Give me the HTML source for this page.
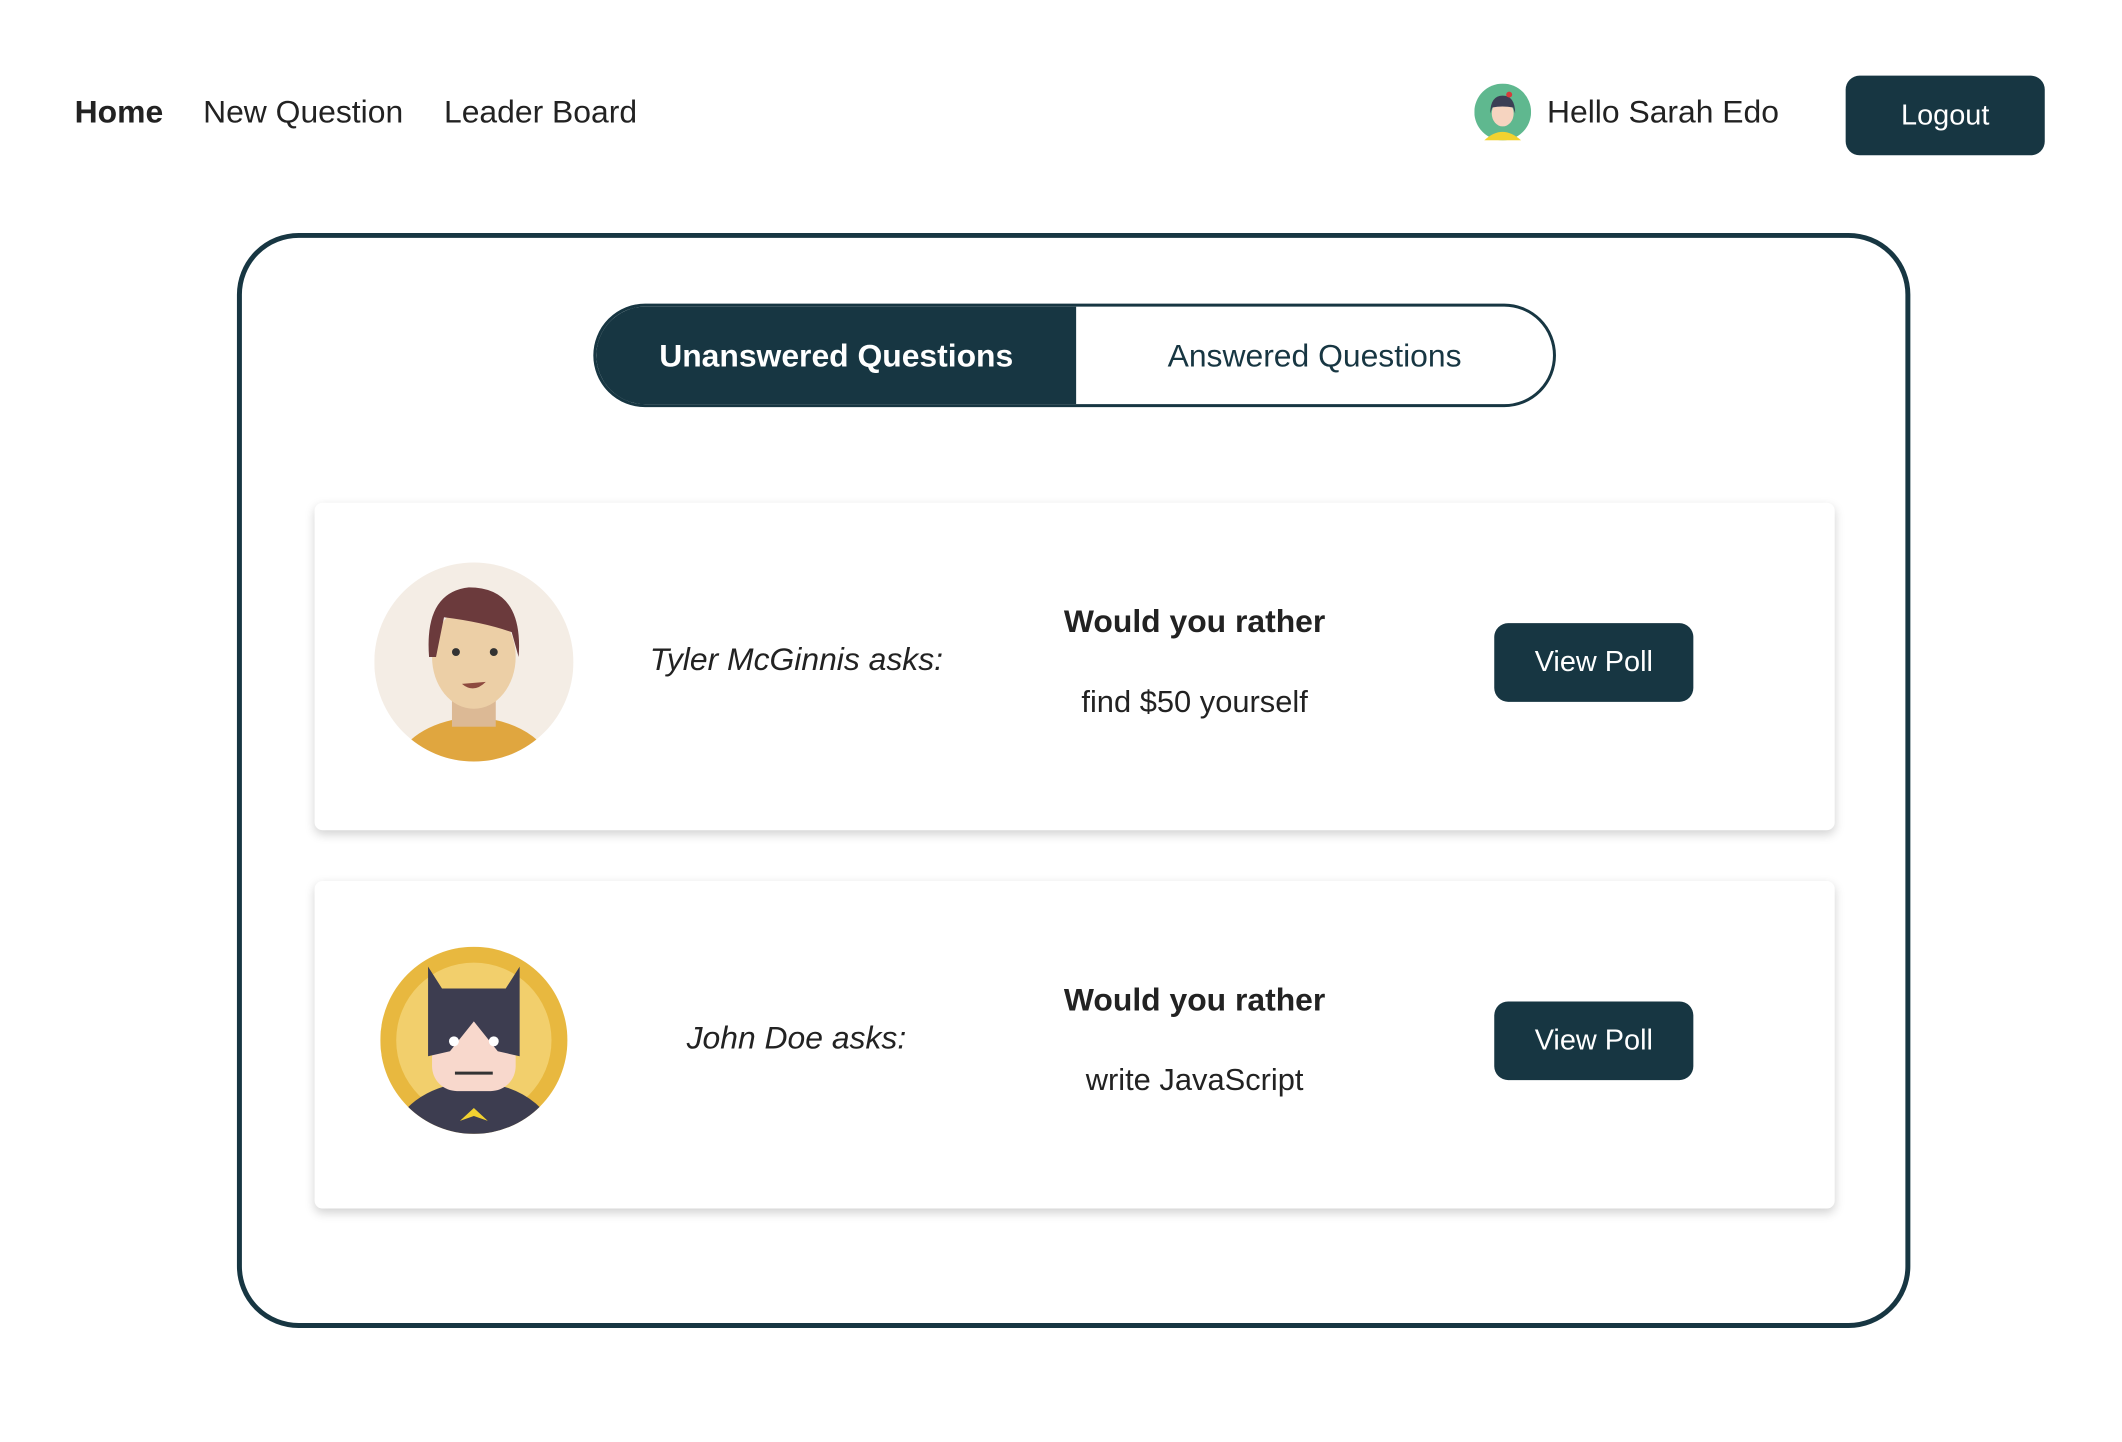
<!DOCTYPE html>
<html><head><meta charset="utf-8"><style>
*{margin:0;padding:0;box-sizing:border-box}
body{width:2122px;height:1442px;background:#fff;font-family:"Liberation Sans",sans-serif;color:#222;position:relative;overflow:hidden}
#w{position:absolute;left:0;top:0;width:2122px;height:1442px;transform:scale(0.9955);transform-origin:0 0}
.a{position:absolute;white-space:nowrap}
.nav{font-size:32px;top:94px}
.btn{position:absolute;background:#173642;color:#fff;border-radius:14px;display:flex;align-items:center;justify-content:center;font-size:29px}
.box{position:absolute;left:238px;top:234px;width:1681px;height:1100px;border:5px solid #173642;border-radius:62px}
.tog{position:absolute;left:596px;top:305px;width:967px;height:104px;border:3px solid #173642;border-radius:52px;overflow:hidden;display:flex}
.tog div{flex:1;display:flex;align-items:center;justify-content:center;font-size:32px;color:#173642}
.tog .on{background:#173642;color:#fff;font-weight:bold;flex:0 0 482px}
.card{position:absolute;left:316px;width:1527px;height:329px;background:#fff;border-radius:8px;box-shadow:0 4px 10px rgba(0,0,0,.18)}
.c{position:absolute;transform:translateX(-50%);white-space:nowrap}
</style></head><body><div id="w">
<div class="a nav" style="left:75px;font-weight:bold">Home</div>
<div class="a nav" style="left:204px">New Question</div>
<div class="a nav" style="left:446px">Leader Board</div>
<svg class="a" style="left:1481px;top:84px" width="57" height="57" viewBox="0 0 57 57"><circle cx="28.5" cy="28.5" r="28.5" fill="#5fb88f"/><path d="M10 57 Q28 40 47 57Z" fill="#f2d230"/><ellipse cx="28.5" cy="30" rx="11" ry="13" fill="#f6d4c0"/><path d="M16 30 Q16 12 28.5 12 Q41 12 41 30 L39 24 Q28 22 18 24Z" fill="#3b3f55"/><circle cx="35" cy="11" r="3" fill="#d63b3b"/></svg>
<div class="a nav" style="left:1554px">Hello Sarah Edo</div>
<div class="btn" style="left:1854px;top:76px;width:200px;height:80px">Logout</div>
<div class="box"></div>
<div class="tog"><div class="on">Unanswered Questions</div><div>Answered Questions</div></div>

<div class="card" style="top:505px"></div>
<svg class="a" style="left:376px;top:565px" width="200" height="200" viewBox="0 0 200 200"><defs><clipPath id="k1"><circle cx="100" cy="100" r="100"/></clipPath></defs><g clip-path="url(#k1)"><rect width="200" height="200" fill="#f4ede5"/><path d="M20 200 Q40 160 100 155 Q160 160 180 200Z" fill="#e0a63f"/><rect x="78" y="120" width="44" height="45" fill="#dcb995"/><ellipse cx="100" cy="95" rx="42" ry="52" fill="#eccfa6"/><path d="M55 95 Q50 30 95 25 Q150 25 145 95 L138 70 Q110 60 70 55 L62 95Z" fill="#6b3a3c"/><circle cx="82" cy="90" r="4" fill="#333"/><circle cx="120" cy="90" r="4" fill="#333"/><path d="M88 122 Q100 132 112 120Z" fill="#8d4a3f"/></g></svg>
<div class="c" style="left:800px;top:644px;font-size:32px;font-style:italic">Tyler McGinnis asks:</div>
<div class="c" style="left:1200px;top:606px;font-size:32px;font-weight:bold">Would you rather</div>
<div class="c" style="left:1200px;top:687px;font-size:31px">find $50 yourself</div>
<div class="btn" style="left:1501px;top:626px;width:200px;height:79px">View Poll</div>

<div class="card" style="top:885px"></div>
<svg class="a" style="left:382px;top:951px" width="188" height="188" viewBox="0 0 188 188"><defs><clipPath id="k2"><circle cx="94" cy="94" r="94"/></clipPath></defs><g clip-path="url(#k2)"><rect width="188" height="188" fill="#e8b83f"/><circle cx="94" cy="94" r="78" fill="#f2cf6c"/><path d="M10 188 Q30 140 94 135 Q158 140 178 188Z" fill="#3d3d50"/><path d="M80 175 L94 162 L108 175 L94 170Z" fill="#f2d230"/><rect x="52" y="70" width="84" height="75" rx="25" fill="#f8d8cc"/><path d="M48 20 L62 42 L126 42 L140 20 L140 110 L118 105 L94 75 L70 105 L48 110Z" fill="#3d3d50"/><path d="M75 127 L113 127" stroke="#333" stroke-width="3"/><circle cx="74" cy="95" r="5" fill="#fff"/><circle cx="114" cy="95" r="5" fill="#fff"/></g></svg>
<div class="c" style="left:800px;top:1024px;font-size:32px;font-style:italic">John Doe asks:</div>
<div class="c" style="left:1200px;top:986px;font-size:32px;font-weight:bold">Would you rather</div>
<div class="c" style="left:1200px;top:1067px;font-size:31px">write JavaScript</div>
<div class="btn" style="left:1501px;top:1006px;width:200px;height:79px">View Poll</div>
</div></body></html>
